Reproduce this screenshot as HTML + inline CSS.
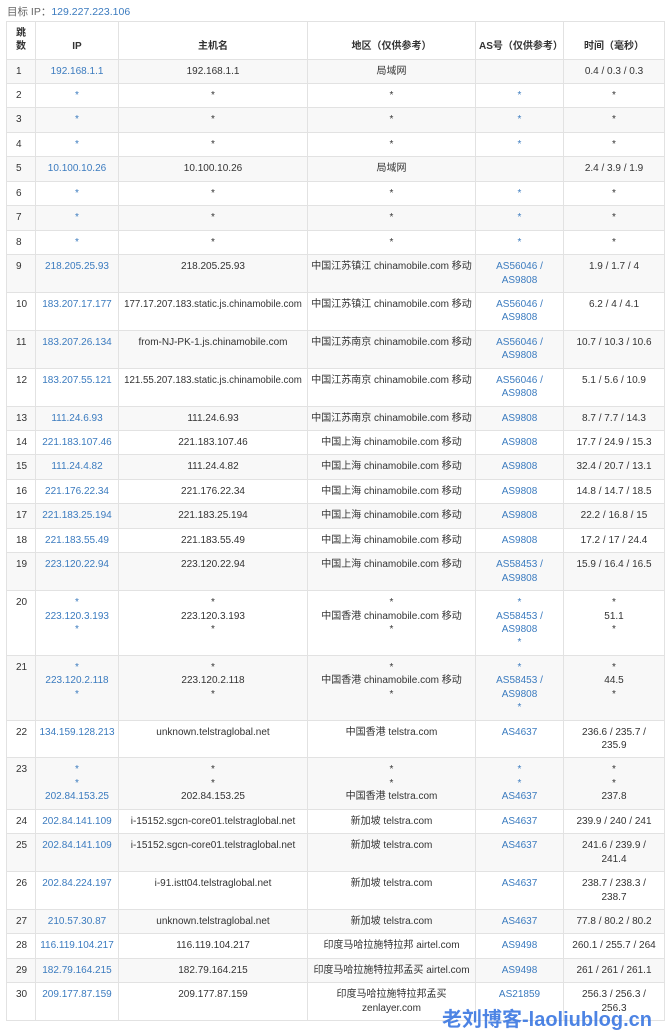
<!DOCTYPE html>
<html><head><meta charset="utf-8"><style>
body{margin:0;background:#fff;font-family:"Liberation Sans","Noto Sans CJK SC",sans-serif;font-size:10px;color:#333;width:670px;height:1024px;overflow:hidden;position:relative}
.t{position:absolute;left:7px;top:4px;color:#666;font-size:10.5px}
.t a{color:#3b7bbf}
table{position:absolute;left:6px;top:21px;border-collapse:collapse;table-layout:fixed;width:658px}
td,th{border:1px solid #e2e2e2;padding:5px 3px 5px;line-height:13.43px;height:13.43px;text-align:center;vertical-align:top;white-space:nowrap;overflow:hidden;box-sizing:content-box}
th{vertical-align:bottom;font-weight:bold;color:#333;padding-bottom:5px;line-height:13.3px}
tr:nth-child(odd) td{background:#f8f8f8}
td:first-child{text-align:left;padding-left:9px}
th:first-child{text-align:left;padding-left:9px}
.b{color:#3b7bbf}
td.x{font-size:9.7px}
.wm{position:absolute;left:442px;top:1003px;font-size:20px;font-weight:bold;color:#2f6fe0;opacity:.85;white-space:nowrap;font-family:"Liberation Sans","Noto Sans CJK SC",sans-serif}
</style></head><body>
<div class="t">目标 IP：<a>129.227.223.106</a></div>
<table>
<colgroup><col style="width:29px"><col style="width:83px"><col style="width:189px"><col style="width:168px"><col style="width:88px"><col style="width:101px"></colgroup>
<thead><tr><th>跳<br>数</th><th>IP</th><th>主机名</th><th>地区（仅供参考）</th><th>AS号（仅供参考）</th><th>时间（毫秒）</th></tr></thead>
<tbody>
<tr><td>1</td><td class="b">192.168.1.1</td><td>192.168.1.1</td><td>局域网</td><td></td><td>0.4 / 0.3 / 0.3</td></tr>
<tr><td>2</td><td class="b">*</td><td>*</td><td>*</td><td class="b">*</td><td>*</td></tr>
<tr><td>3</td><td class="b">*</td><td>*</td><td>*</td><td class="b">*</td><td>*</td></tr>
<tr><td>4</td><td class="b">*</td><td>*</td><td>*</td><td class="b">*</td><td>*</td></tr>
<tr><td>5</td><td class="b">10.100.10.26</td><td>10.100.10.26</td><td>局域网</td><td></td><td>2.4 / 3.9 / 1.9</td></tr>
<tr><td>6</td><td class="b">*</td><td>*</td><td>*</td><td class="b">*</td><td>*</td></tr>
<tr><td>7</td><td class="b">*</td><td>*</td><td>*</td><td class="b">*</td><td>*</td></tr>
<tr><td>8</td><td class="b">*</td><td>*</td><td>*</td><td class="b">*</td><td>*</td></tr>
<tr><td>9</td><td class="b">218.205.25.93</td><td>218.205.25.93</td><td>中国江苏镇江 chinamobile.com 移动</td><td class="b">AS56046 /<br>AS9808</td><td>1.9 / 1.7 / 4</td></tr>
<tr><td>10</td><td class="b">183.207.17.177</td><td class="x">177.17.207.183.static.js.chinamobile.com</td><td>中国江苏镇江 chinamobile.com 移动</td><td class="b">AS56046 /<br>AS9808</td><td>6.2 / 4 / 4.1</td></tr>
<tr><td>11</td><td class="b">183.207.26.134</td><td>from-NJ-PK-1.js.chinamobile.com</td><td>中国江苏南京 chinamobile.com 移动</td><td class="b">AS56046 /<br>AS9808</td><td>10.7 / 10.3 / 10.6</td></tr>
<tr><td>12</td><td class="b">183.207.55.121</td><td class="x">121.55.207.183.static.js.chinamobile.com</td><td>中国江苏南京 chinamobile.com 移动</td><td class="b">AS56046 /<br>AS9808</td><td>5.1 / 5.6 / 10.9</td></tr>
<tr><td>13</td><td class="b">111.24.6.93</td><td>111.24.6.93</td><td>中国江苏南京 chinamobile.com 移动</td><td class="b">AS9808</td><td>8.7 / 7.7 / 14.3</td></tr>
<tr><td>14</td><td class="b">221.183.107.46</td><td>221.183.107.46</td><td>中国上海 chinamobile.com 移动</td><td class="b">AS9808</td><td>17.7 / 24.9 / 15.3</td></tr>
<tr><td>15</td><td class="b">111.24.4.82</td><td>111.24.4.82</td><td>中国上海 chinamobile.com 移动</td><td class="b">AS9808</td><td>32.4 / 20.7 / 13.1</td></tr>
<tr><td>16</td><td class="b">221.176.22.34</td><td>221.176.22.34</td><td>中国上海 chinamobile.com 移动</td><td class="b">AS9808</td><td>14.8 / 14.7 / 18.5</td></tr>
<tr><td>17</td><td class="b">221.183.25.194</td><td>221.183.25.194</td><td>中国上海 chinamobile.com 移动</td><td class="b">AS9808</td><td>22.2 / 16.8 / 15</td></tr>
<tr><td>18</td><td class="b">221.183.55.49</td><td>221.183.55.49</td><td>中国上海 chinamobile.com 移动</td><td class="b">AS9808</td><td>17.2 / 17 / 24.4</td></tr>
<tr><td>19</td><td class="b">223.120.22.94</td><td>223.120.22.94</td><td>中国上海 chinamobile.com 移动</td><td class="b">AS58453 /<br>AS9808</td><td>15.9 / 16.4 / 16.5</td></tr>
<tr><td>20</td><td class="b">*<br>223.120.3.193<br>*</td><td>*<br>223.120.3.193<br>*</td><td>*<br>中国香港 chinamobile.com 移动<br>*</td><td class="b">*<br>AS58453 /<br>AS9808<br>*</td><td>*<br>51.1<br>*</td></tr>
<tr><td>21</td><td class="b">*<br>223.120.2.118<br>*</td><td>*<br>223.120.2.118<br>*</td><td>*<br>中国香港 chinamobile.com 移动<br>*</td><td class="b">*<br>AS58453 /<br>AS9808<br>*</td><td>*<br>44.5<br>*</td></tr>
<tr><td>22</td><td class="b">134.159.128.213</td><td>unknown.telstraglobal.net</td><td>中国香港 telstra.com</td><td class="b">AS4637</td><td>236.6 / 235.7 /<br>235.9</td></tr>
<tr><td>23</td><td class="b">*<br>*<br>202.84.153.25</td><td>*<br>*<br>202.84.153.25</td><td>*<br>*<br>中国香港 telstra.com</td><td class="b">*<br>*<br>AS4637</td><td>*<br>*<br>237.8</td></tr>
<tr><td>24</td><td class="b">202.84.141.109</td><td>i-15152.sgcn-core01.telstraglobal.net</td><td>新加坡 telstra.com</td><td class="b">AS4637</td><td>239.9 / 240 / 241</td></tr>
<tr><td>25</td><td class="b">202.84.141.109</td><td>i-15152.sgcn-core01.telstraglobal.net</td><td>新加坡 telstra.com</td><td class="b">AS4637</td><td>241.6 / 239.9 /<br>241.4</td></tr>
<tr><td>26</td><td class="b">202.84.224.197</td><td>i-91.istt04.telstraglobal.net</td><td>新加坡 telstra.com</td><td class="b">AS4637</td><td>238.7 / 238.3 /<br>238.7</td></tr>
<tr><td>27</td><td class="b">210.57.30.87</td><td>unknown.telstraglobal.net</td><td>新加坡 telstra.com</td><td class="b">AS4637</td><td>77.8 / 80.2 / 80.2</td></tr>
<tr><td>28</td><td class="b">116.119.104.217</td><td>116.119.104.217</td><td>印度马哈拉施特拉邦 airtel.com</td><td class="b">AS9498</td><td>260.1 / 255.7 / 264</td></tr>
<tr><td>29</td><td class="b">182.79.164.215</td><td>182.79.164.215</td><td>印度马哈拉施特拉邦孟买 airtel.com</td><td class="b">AS9498</td><td>261 / 261 / 261.1</td></tr>
<tr><td>30</td><td class="b">209.177.87.159</td><td>209.177.87.159</td><td>印度马哈拉施特拉邦孟买<br>zenlayer.com</td><td class="b">AS21859</td><td>256.3 / 256.3 /<br>256.3</td></tr>
</tbody></table>
<div class="wm">老刘博客-laoliublog.cn</div>
</body></html>
